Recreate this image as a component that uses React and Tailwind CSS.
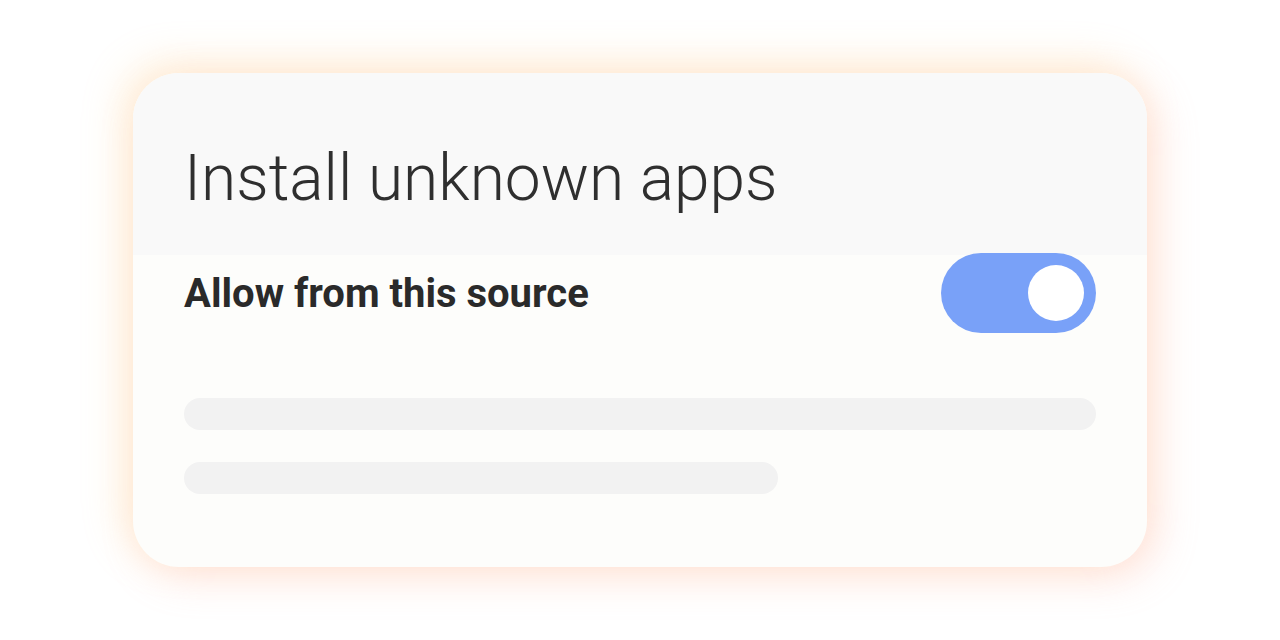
export default function App() {
  return (
    <div className="w-[1280px] h-[640px] bg-white flex items-center justify-center" style={{ fontFamily: "Roboto, 'Liberation Sans', sans-serif" }}>
      <div className="w-[1014px] h-[494px] rounded-[46px] overflow-hidden flex flex-col bg-[#fdfdfb] shadow-[-10px_-10px_40px_rgba(255,205,130,0.3),10px_10px_40px_rgba(255,170,150,0.3)]">
        <div className="h-[182px] bg-[#f9f9f9] px-[51px] pt-[70px]">
          <div className="text-[64px] leading-[72px] font-light text-[#2f2f2f]">Install unknown apps</div>
        </div>
        <div className="px-[51px] flex flex-col">
          <div className="flex items-center justify-between h-[80px] -mt-[2px]">
            <div className="text-[40px] font-bold text-[#2a2a2a] leading-none pt-[2px]">Allow from this source</div>
            <div className="w-[155px] h-[80px] rounded-full bg-[#79a1f8] flex items-center justify-end pr-[12px]">
              <div className="w-[56px] h-[56px] rounded-full bg-white" />
            </div>
          </div>
          <div className="mt-[65px] h-[32px] rounded-full bg-[#f2f2f2] w-full" />
          <div className="mt-[32px] h-[32px] rounded-full bg-[#f2f2f2] w-[594px]" />
        </div>
      </div>
    </div>
  );
}
